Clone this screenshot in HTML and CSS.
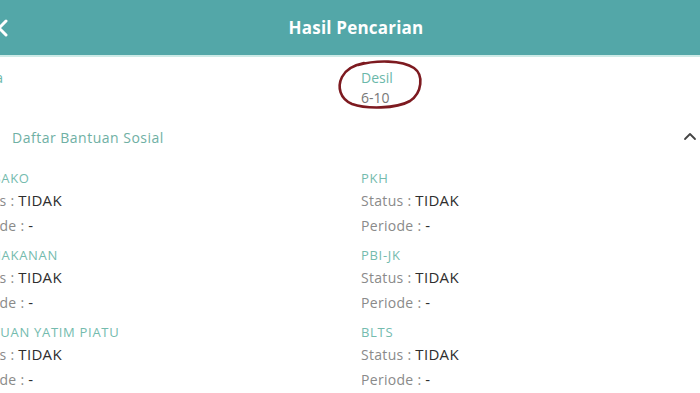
FILE: index.html
```html
<!DOCTYPE html>
<html lang="id">
<head>
  <meta charset="UTF-8">
  <meta name="viewport" content="width=device-width, initial-scale=1.0">
  <title>Hasil Pencarian</title>
  <link rel="stylesheet" href="styles.css">
</head>
<body>
  <header class="topbar">
    <span class="back">
      <svg width="16" height="18" viewBox="0 0 16 18"><path d="M11 2 L4 9 L11 16" fill="none" stroke="#fff" stroke-width="3" stroke-linecap="round" stroke-linejoin="round"/></svg>
    </span>
    <h1 class="title">Hasil Pencarian</h1>
  </header>

  <main class="page">
    <section class="info">
      <div class="info-item">
        <div class="label">Nama</div>
        <div class="value"></div>
      </div>
      <div class="info-item">
        <div class="label">Desil</div>
        <div class="value">6-10</div>
        <!-- coretan tangan -->
        <svg class="mark" width="90" height="52" viewBox="0 0 90 52">
          <path d="M22 6 C40 1 66 1 78 9 C88 16 86 34 74 42 C60 50 30 50 16 45 C4 40 1 28 6 18 C10 10 18 6 28 4" fill="none" stroke="#7d1a20" stroke-width="2.6" stroke-linecap="round"/>
        </svg>
      </div>
    </section>

    <section class="accordion">
      <div class="acc-head">
        <span class="acc-title">Daftar Bantuan Sosial</span>
        <svg class="acc-icon" width="14" height="10" viewBox="0 0 14 10"><path d="M2 8 L7 3 L12 8" fill="none" stroke="#444" stroke-width="1.8" stroke-linecap="round" stroke-linejoin="round"/></svg>
      </div>

      <div class="bansos">
        <div class="item">
          <div class="item-name">SEMBAKO</div>
          <div class="row">Status : <b>TIDAK</b></div>
          <div class="row">Periode : <b>-</b></div>
        </div>
        <div class="item">
          <div class="item-name">PKH</div>
          <div class="row">Status : <b>TIDAK</b></div>
          <div class="row">Periode : <b>-</b></div>
        </div>
        <div class="item">
          <div class="item-name">PERMAKANAN</div>
          <div class="row">Status : <b>TIDAK</b></div>
          <div class="row">Periode : <b>-</b></div>
        </div>
        <div class="item">
          <div class="item-name">PBI-JK</div>
          <div class="row">Status : <b>TIDAK</b></div>
          <div class="row">Periode : <b>-</b></div>
        </div>
        <div class="item">
          <div class="item-name">BANTUAN YATIM PIATU</div>
          <div class="row">Status : <b>TIDAK</b></div>
          <div class="row">Periode : <b>-</b></div>
        </div>
        <div class="item">
          <div class="item-name">BLTS</div>
          <div class="row">Status : <b>TIDAK</b></div>
          <div class="row">Periode : <b>-</b></div>
        </div>
      </div>
    </section>
  </main>
</body>
</html>
```

FILE: styles.css
```css
body {
  margin: 0;
  font-family: 'Open Sans', 'Noto Sans', sans-serif;
  background: #fff;
  overflow: hidden;
}

.topbar {
  height: 55px;
  background: #53a7a8;
  border-bottom: 2px solid #cdebe7;
  display: flex;
  align-items: center;
  position: relative;
}

.back {
  display: flex;
  margin-left: -5px;
}

.title {
  flex: 1;
  margin: 0 0 0 -11px;
  padding-left: 12px;
  text-align: center;
  color: #fff;
  font-size: 17px;
  font-weight: 700;
  letter-spacing: 0.2px;
}

.page {
  margin-left: -36px;
  width: 794px;
}

.info {
  display: grid;
  grid-template-columns: 397px 397px;
  padding-top: 11px;
  height: 49px;
}

.info-item {
  position: relative;
}

.label {
  color: #6bb8aa;
  font-size: 14px;
  line-height: 20px;
}

.value {
  color: #777;
  font-size: 14px;
  line-height: 20px;
  min-height: 20px;
}

.mark {
  position: absolute;
  left: -25px;
  top: -9px;
}

.acc-head {
  display: flex;
  align-items: center;
  height: 40px;
  padding-left: 48px;
  padding-right: 61px;
}

.acc-title {
  flex: 1;
  color: #6fb0a4;
  font-size: 14px;
  letter-spacing: 0.5px;
}

.acc-icon {
  margin-top: -2px;
}

.bansos {
  display: grid;
  grid-template-columns: 397px 397px;
  padding-top: 11px;
}

.item {
  height: 77px;
}

.item-name {
  color: #74bbae;
  font-size: 13px;
  letter-spacing: 0.7px;
  line-height: 20px;
}

.row {
  color: #8a8a8a;
  font-size: 14px;
  line-height: 24px;
  letter-spacing: 0.3px;
}

.row b {
  color: #2e2e2e;
  font-weight: 400;
  font-size: 15px;
}
```
